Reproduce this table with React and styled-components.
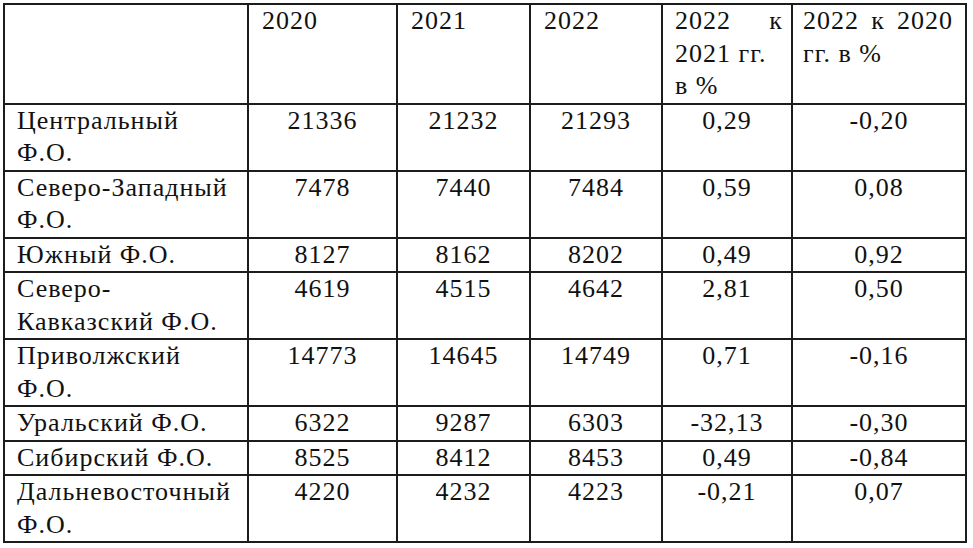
import React from 'react'
import styled, { createGlobalStyle } from 'styled-components'

const Global = createGlobalStyle`
html, body {
  margin:0;
  padding:0;
  background:#fff;
}
`
const Page = styled.div`
width:973px;
height:548px;
padding:3px 0 0 3px;
box-sizing:border-box;
background:#fff;
`
const Grid = styled.div`
display:grid;
grid-template-columns:244px 149px 133px 132px 130px 174px;
width:max-content;
border-left:2px solid #1c1c1c;
border-top:2px solid #1c1c1c;
font-family:"Liberation Serif","Times New Roman",serif;
font-size:26px;
letter-spacing:1px;
line-height:32.5px;
color:#111;
`
const Cell = styled.div`
box-sizing:border-box;
border-right:2px solid #1c1c1c;
border-bottom:2px solid #1c1c1c;
padding:0 ${p => (p.$left ? '6px' : '10px')} 0 ${p => (p.$left ? '12px' : '10px')};
text-align:${p => (p.$left ? 'left' : 'center')};
white-space:nowrap;
`
const HeadCell = styled.div`
box-sizing:border-box;
border-right:2px solid #1c1c1c;
border-bottom:2px solid #1c1c1c;
padding:0 ${p => p.$pr || '10px'} 0 ${p => p.$pl || '13px'};
text-align:left;
`
const Line = styled.div`
white-space:nowrap;
text-align:left;
text-align-last:${p => (p.$spread ? 'justify' : 'auto')};
`

const rows = [
  [['Центральный', 'Ф.О.'], '21336', '21232', '21293', '0,29', '-0,20'],
  [['Северо-Западный', 'Ф.О.'], '7478', '7440', '7484', '0,59', '0,08'],
  [['Южный Ф.О.'], '8127', '8162', '8202', '0,49', '0,92'],
  [['Северо-', 'Кавказский Ф.О.'], '4619', '4515', '4642', '2,81', '0,50'],
  [['Приволжский', 'Ф.О.'], '14773', '14645', '14749', '0,71', '-0,16'],
  [['Уральский Ф.О.'], '6322', '9287', '6303', '-32,13', '-0,30'],
  [['Сибирский Ф.О.'], '8525', '8412', '8453', '0,49', '-0,84'],
  [['Дальневосточный', 'Ф.О.'], '4220', '4232', '4223', '-0,21', '0,07'],
]

const App = () => {
  return (
    <Page>
      <Global />
      <Grid>
        <HeadCell />
        <HeadCell>2020</HeadCell>
        <HeadCell>2021</HeadCell>
        <HeadCell>2022</HeadCell>
        <HeadCell $pl="12px" $pr="8px">
          <Line $spread>2022 к</Line>
          <Line>2021 гг.</Line>
          <Line>в %</Line>
        </HeadCell>
        <HeadCell $pl="10px" $pr="12px">
          <Line $spread>2022 к 2020</Line>
          <Line>гг. в %</Line>
        </HeadCell>
        {rows.map((r, i) => (
          <React.Fragment key={i}>
            <Cell $left>
              {r[0].map((t, j) => <div key={j}>{t}</div>)}
            </Cell>
            {r.slice(1).map((v, j) => <Cell key={j}>{v}</Cell>)}
          </React.Fragment>
        ))}
      </Grid>
    </Page>
  )
}

export default App
